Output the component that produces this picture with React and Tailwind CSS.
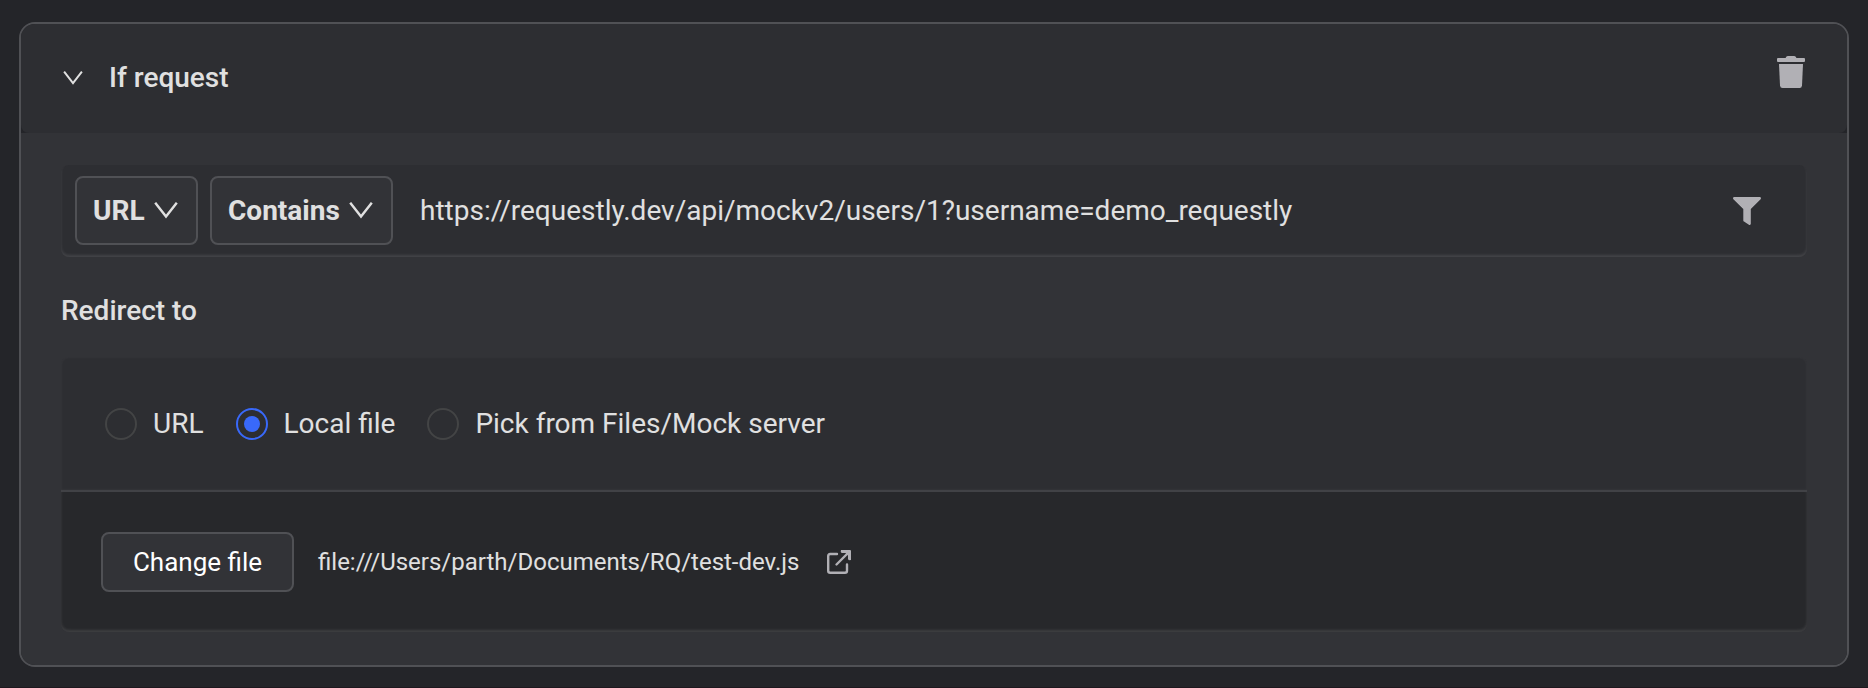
const RADIOS = [
  { label: "URL" },
  { label: "Local file", checked: true },
  { label: "Pick from Files/Mock server" },
];

function Chevron({ className }) {
  return (
    <svg viewBox="0 0 24 17" className={className} fill="none" stroke="currentColor" strokeWidth="2.4">
      <path d="M1.2 0.7 L12 14.6 L22.8 0.7" />
    </svg>
  );
}

function Trash() {
  return (
    <svg viewBox="0 0 28 32" className="h-8 w-7" fill="currentColor">
      <path d="M1 2h7.500l1-1.400Q10 0 10.800 0h6.400q.8 0 1.300.6l1 1.400H27q1 0 1 1v2q0 1-1 1H1Q0 6 0 5V3q0-1 1-1z" />
      <path d="M2 8h24l-1 21.500Q24.800 32 22.500 32h-17Q3.200 32 3 29.500z" />
    </svg>
  );
}

function Funnel() {
  return (
    <svg viewBox="0 0 28 28" className="h-7 w-7" fill="currentColor">
      <path d="M1.300 0h25.400c1.200 0 1.700 1.400.9 2.200L17.800 12v14.800c0 1.100-1.100 1.500-1.900 1l-4.900-3.200q-.7-.5-.7-1.200V12L.4 2.200C-.4 1.400.1 0 1.300 0z" />
    </svg>
  );
}

function OpenExternal() {
  return (
    <svg viewBox="0 0 24 24" className="h-6 w-6">
      <g fill="none" stroke="currentColor" strokeWidth="2.4" strokeLinecap="round">
        <path d="M10 4H3.200Q1.200 4 1.200 6v14.800q0 2 2 2H18q2 0 2-2V14.500" />
        <path d="M9.500 14.500L20 4" />
      </g>
      <path fill="currentColor" d="M14 0h9q1 0 1 1v9l-2 .3-1-1V5.500L18.500 3h-3.800l-1-1z" />
    </svg>
  );
}

function Select({ label, className }) {
  return (
    <button className={`mb-px flex h-[69px] items-center justify-between rounded-lg border-2 border-[#505155] bg-[#323337] pl-4 pr-[18px] font-bold ${className}`}>
      <span>{label}</span>
      <Chevron className="h-[17px] w-6" />
    </button>
  );
}

export default function App() {
  return (
    <div className="h-[688px] w-[1868px] border-b border-[#1e181e] bg-[#242529] px-[19px] pt-[22px] font-[Roboto,sans-serif] text-[28px] leading-[36px] text-[#e0e0e0]">
      <section className="flex h-[645px] flex-col overflow-hidden rounded-2xl border-2 border-[#505155] bg-[#242529]">
        <header className="flex h-[109px] shrink-0 items-center rounded-b-lg bg-[#2d2e32] pb-0.5 pl-[42px] pr-[42px]">
          <Chevron className="h-[14px] w-5" />
          <h2 className="ml-[26px] flex-1 font-medium">If request</h2>
          <button className="mb-[11px] text-[#b1b0b5]"><Trash /></button>
        </header>
        <div className="flex-1 bg-[#323337] px-10 pt-8">
          <div className="flex h-[92px] items-center gap-3 rounded-lg bg-[#2d2e32] pl-[14px] pr-[46px] shadow-[inset_0_-2px_3px_rgba(255,255,255,0.11)]">
            <Select label="URL" className="w-[123px]" />
            <Select label="Contains" className="w-[183px]" />
            <span className="ml-[15px] flex-1">https://requestly.dev/api/mockv2/users/1?username=demo_requestly</span>
            <button className="text-[#b1b0b5]"><Funnel /></button>
          </div>
          <h3 className="mt-[36px] font-medium">Redirect to</h3>
          <div className="mt-7">
            <div className="flex h-[133px] items-center rounded-t-lg bg-[#2d2e32] pl-[44px] shadow-[inset_0_0_3px_rgba(255,255,255,0.06)]">
              {RADIOS.map((r) => (
                <label key={r.label} className="mr-8 flex items-center gap-4">
                  <span className={`flex h-8 w-8 shrink-0 items-center justify-center rounded-full border-2 ${r.checked ? "border-[#3969fa]" : "border-[#434445]"}`}>
                    {r.checked && <span className="h-4 w-4 rounded-full bg-[#3969fa]" />}
                  </span>
                  <span className="whitespace-nowrap">{r.label}</span>
                </label>
              ))}
            </div>
            <div className="h-0.5 bg-[#414246]" />
            <div className="flex h-[140px] items-center rounded-b-lg bg-[#27282b] pl-10 shadow-[inset_0_-2px_3px_rgba(255,255,255,0.11)]">
              <button className="h-[60px] w-[193px] rounded-lg border-2 border-[#505155] bg-[#323337] text-[26px] text-white">Change file</button>
              <span className="ml-6 text-2xl">file:///Users/parth/Documents/RQ/test-dev.js</span>
              <span className="ml-7 text-[#b1b0b5]"><OpenExternal /></span>
            </div>
          </div>
        </div>
      </section>
    </div>
  );
}
